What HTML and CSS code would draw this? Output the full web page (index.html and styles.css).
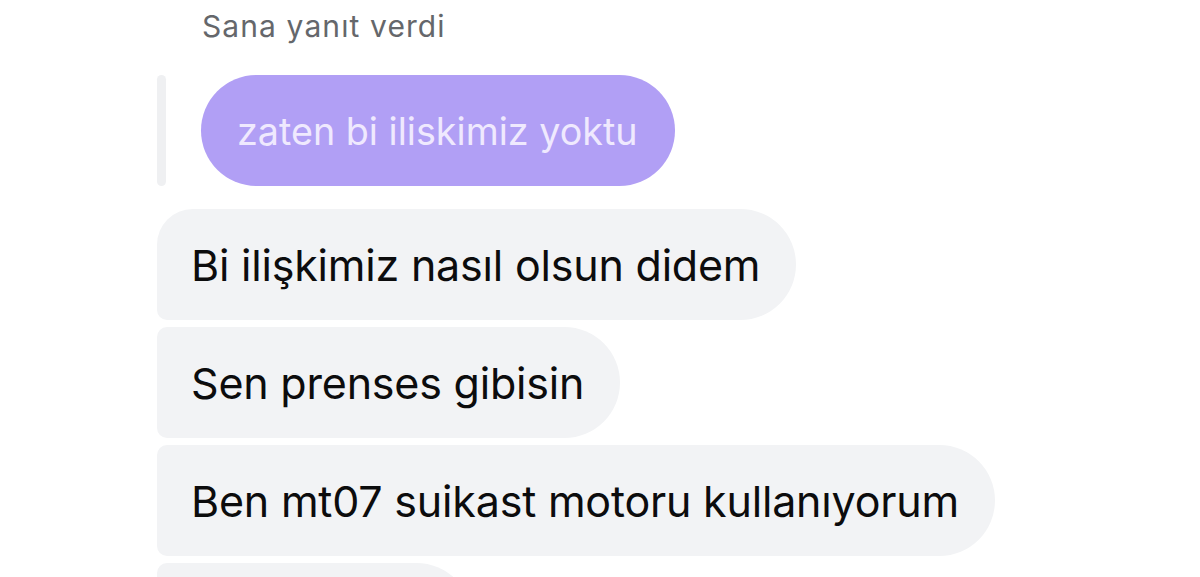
FILE: index.html
```html
<!DOCTYPE html>
<html lang="tr">
<head>
    <meta charset="UTF-8">
    <meta name="viewport" content="width=device-width, initial-scale=1.0">
    <title>Mesajlar</title>
    <link rel="stylesheet" href="styles.css">
</head>
<body>
    <div class="chat">
        <div class="reply-label">Sana yanıt verdi</div>
        <div class="reply-row">
            <div class="reply-bar"></div>
            <div class="reply-bubble">zaten bi iliskimiz yoktu</div>
        </div>
        <div class="messages">
            <div class="bubble first">Bi ilişkimiz nasıl olsun didem</div>
            <div class="bubble">Sen prenses gibisin</div>
            <div class="bubble">Ben mt07 suikast motoru kullanıyorum</div>
            <div class="bubble cut">&nbsp;</div>
        </div>
    </div>
</body>
</html>
```

FILE: styles.css
```css
body {
    margin: 0;
    padding: 0;
    background-color: #fff;
    font-family: "Inter", "Liberation Sans", sans-serif;
    overflow: hidden;
}

.chat {
    padding: 6px 0 0 157px;
    display: flex;
    flex-direction: column;
    align-items: flex-start;
}

.reply-label {
    margin-left: 45px;
    font-size: 30px;
    letter-spacing: 1.1px;
    line-height: 40px;
    color: #65676b;
}

.reply-row {
    display: flex;
    gap: 35px;
    margin-top: 29px;
}

.reply-bar {
    width: 9px;
    height: 111px;
    border-radius: 5px;
    background-color: #eff0f2;
}

.reply-bubble {
    height: 111px;
    display: flex;
    align-items: center;
    padding: 0 37px 0 36px;
    border-radius: 56px;
    background-color: #b19ff5;
    color: #efe9fe;
    font-size: 37.7px;
}

.messages {
    display: flex;
    flex-direction: column;
    align-items: flex-start;
    gap: 7px;
    margin-top: 23px;
}

.bubble {
    height: 111px;
    display: flex;
    align-items: center;
    padding: 0 36px 0 34px;
    border-radius: 10px 56px 56px 10px;
    background-color: #f2f3f5;
    color: #0c0c0d;
    font-size: 43px;
    letter-spacing: -0.2px;
}

.bubble.first {
    border-top-left-radius: 36px;
}

.bubble.cut {
    width: 245px;
}
```
